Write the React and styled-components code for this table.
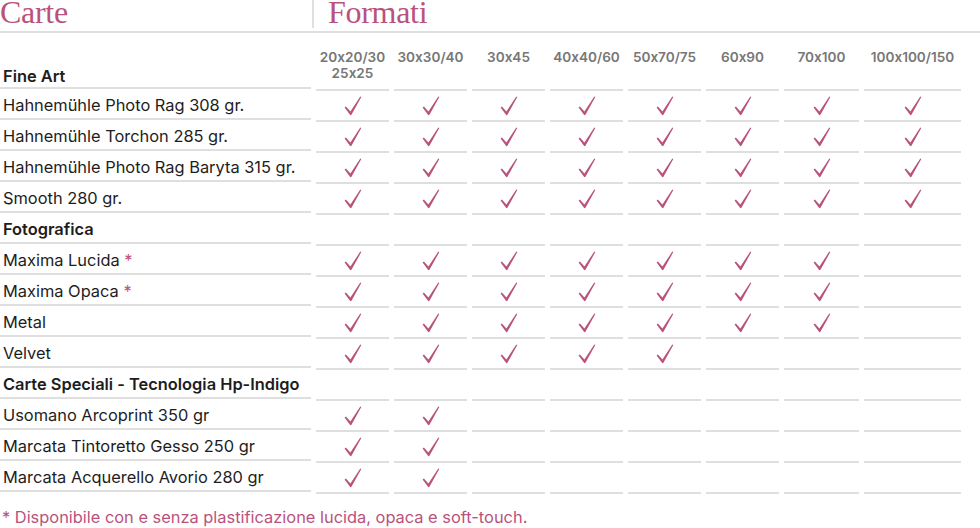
import React from "react";
import styled, { createGlobalStyle } from "styled-components";

const GlobalStyle = createGlobalStyle`
  html, body { margin: 0; padding: 0; background: #ffffff; }
  body {
    font-family: Inter, "Noto Sans", sans-serif;
    color: #1f1f1f;
    font-feature-settings: "calt" 0;
  }
`;

const PINK = "#b9527c";
const LINE = "#e0dfe0";
const TEMPLATE = "311px repeat(6, 73px) 75px 97px";

const Page = styled.div`
  width: 980px;
  height: 528px;
  overflow: hidden;
`;

const TitleRow = styled.div`
  display: flex;
  align-items: flex-start;
  height: 31px;
  border-bottom: 2px solid ${LINE};
`;

const Title = styled.h1`
  margin: 0;
  font-family: "Liberation Serif", "DejaVu Serif", serif;
  font-weight: 400;
  font-size: 32px;
  line-height: 25px;
  color: ${PINK};
  letter-spacing: -0.3px;
`;

const CarteBox = styled.div`
  width: 312px;
  height: 28px;
  border-right: 2px solid ${LINE};
`;

const FormatiBox = styled.div`
  padding-left: 14px;
`;

const Row = styled.div`
  display: grid;
  grid-template-columns: ${TEMPLATE};
  column-gap: 5px;
`;

const Cell = styled.div`
  height: ${(p) => (p.$head ? 56 : 29)}px;
  border-bottom: 2px solid ${LINE};
  display: flex;
  align-items: ${(p) => (p.$head ? "flex-start" : "center")};
  justify-content: center;
`;

const LabelCell = styled.div`
  height: ${(p) => (p.$head ? 56 : 29)}px;
  border-bottom: 2px solid ${LINE};
  display: flex;
  align-items: ${(p) => (p.$head ? "flex-end" : "center")};
  padding-left: 3px;
  font-size: 16.4px;
  line-height: 20px;
  font-weight: ${(p) => (p.$bold ? 600 : 400)};
  color: #1d1d1d;
  box-sizing: border-box;
  padding-bottom: ${(p) => (p.$head ? 1 : 0)}px;
  white-space: nowrap;
`;

const ColHead = styled.div`
  padding-top: 16px;
  font-size: 13.6px;
  line-height: 16px;
  font-weight: 600;
  color: #777777;
  text-align: center;
  white-space: pre-line;
`;

const Star = styled.span`
  color: ${PINK};
`;

const Note = styled.p`
  margin: 13px 0 0;
  padding-left: 2px;
  font-size: 16.4px;
  line-height: 20px;
  color: ${PINK};
`;

const CheckSvg = styled.svg`
  width: 18px;
  height: 20px;
  display: block;
`;

const Check = () => (
  <CheckSvg viewBox="0 0 18 20" aria-hidden="true">
    <path
      d="M0.6 11.4 L1.9 10.6 L6.4 15.4 L16.3 0.6 L17.3 1.1 L7.6 18.4 Q6.8 19.8 5.8 18.6 Z"
      fill={PINK}
    />
  </CheckSvg>
);

const COLS = [
  "20x20/30\n25x25",
  "30x30/40",
  "30x45",
  "40x40/60",
  "50x70/75",
  "60x90",
  "70x100",
  "100x100/150",
];

const ROWS = [
  { label: "Hahnemühle Photo Rag 308 gr.", n: 8 },
  { label: "Hahnemühle Torchon 285 gr.", n: 8 },
  { label: "Hahnemühle Photo Rag Baryta 315 gr.", n: 8 },
  { label: "Smooth 280 gr.", n: 8 },
  { label: "Fotografica", cat: true },
  { label: "Maxima Lucida", star: true, n: 7 },
  { label: "Maxima Opaca", star: true, n: 7 },
  { label: "Metal", n: 7 },
  { label: "Velvet", n: 5 },
  { label: "Carte Speciali - Tecnologia Hp-Indigo", cat: true },
  { label: "Usomano Arcoprint 350 gr", n: 2 },
  { label: "Marcata Tintoretto Gesso 250 gr", n: 2 },
  { label: "Marcata Acquerello Avorio 280 gr", n: 2 },
];

export default function App() {
  return (
    <Page>
      <GlobalStyle />
      <TitleRow>
        <CarteBox>
          <Title>Carte</Title>
        </CarteBox>
        <FormatiBox>
          <Title>Formati</Title>
        </FormatiBox>
      </TitleRow>
      <Row>
        <LabelCell $head $bold>Fine Art</LabelCell>
        {COLS.map((c) => (
          <Cell $head key={c}>
            <ColHead>{c}</ColHead>
          </Cell>
        ))}
      </Row>
      {ROWS.map((r) => (
        <Row key={r.label}>
          <LabelCell $bold={r.cat}>
            {r.label}
            {r.star && <Star>&nbsp;*</Star>}
          </LabelCell>
          {COLS.map((c, i) => (
            <Cell key={c}>{!r.cat && i < r.n ? <Check /> : null}</Cell>
          ))}
        </Row>
      ))}
      <Note>* Disponibile con e senza plastificazione lucida, opaca e soft-touch.</Note>
    </Page>
  );
}
